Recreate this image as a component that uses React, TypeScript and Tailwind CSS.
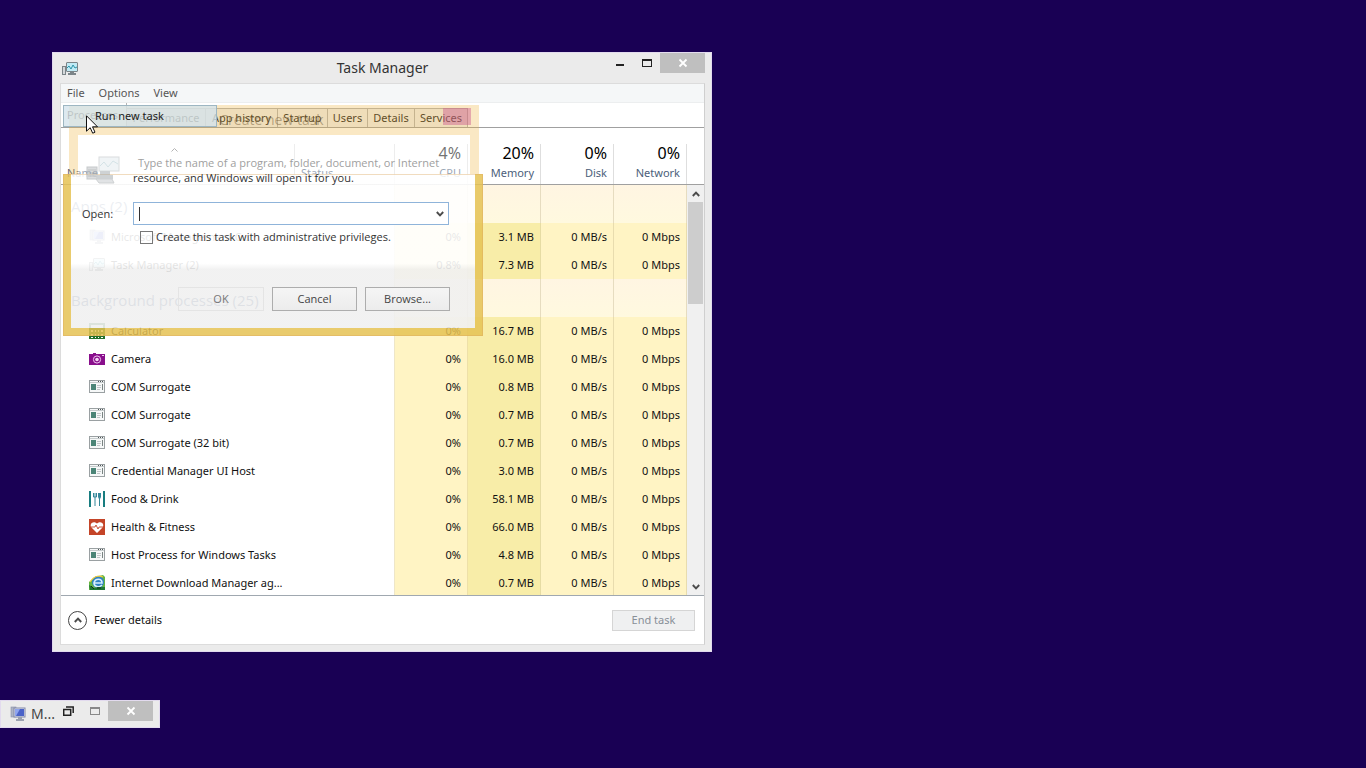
import type { ReactNode } from "react";

type IconName = "pc" | "monitor" | "calc" | "camera" | "app" | "food" | "health" | "idm";

interface Process {
  name: string;
  icon: IconName;
  cpu: string;
  memory: string;
}

const apps: Process[] = [
  { name: "Microsoft Management C...", icon: "pc", cpu: "0%", memory: "3.1 MB" },
  { name: "Task Manager (2)", icon: "monitor", cpu: "0.8%", memory: "7.3 MB" },
];

const background: Process[] = [
  { name: "Calculator", icon: "calc", cpu: "0%", memory: "16.7 MB" },
  { name: "Camera", icon: "camera", cpu: "0%", memory: "16.0 MB" },
  { name: "COM Surrogate", icon: "app", cpu: "0%", memory: "0.8 MB" },
  { name: "COM Surrogate", icon: "app", cpu: "0%", memory: "0.7 MB" },
  { name: "COM Surrogate (32 bit)", icon: "app", cpu: "0%", memory: "0.7 MB" },
  { name: "Credential Manager UI Host", icon: "app", cpu: "0%", memory: "3.0 MB" },
  { name: "Food & Drink", icon: "food", cpu: "0%", memory: "58.1 MB" },
  { name: "Health & Fitness", icon: "health", cpu: "0%", memory: "66.0 MB" },
  { name: "Host Process for Windows Tasks", icon: "app", cpu: "0%", memory: "4.8 MB" },
  { name: "Internet Download Manager ag...", icon: "idm", cpu: "0%", memory: "0.7 MB" },
];

function Glyph({ name }: { name: IconName }) {
  const drawings: Record<IconName, ReactNode> = {
    pc: (
      <>
        <rect x="1" y="1" width="5" height="10" fill="#aeb4c4" stroke="#8790a8" strokeWidth="0.6" />
        <rect x="4" y="2" width="11" height="9" fill="#dfe3ee" stroke="#8188a8" />
        <rect x="5" y="3" width="9" height="7" fill="#4a62c8" />
        <path d="M5 3h5L6 10H5z" fill="#8ea4ee" />
        <path d="M8 11h4v2h2v2H6v-2h2z" fill="#9ba1b0" />
      </>
    ),
    monitor: (
      <>
        <rect x="0.5" y="5.5" width="3" height="8" fill="#d4d8da" stroke="#7b8488" />
        <rect x="4.5" y="1.5" width="11" height="9" rx="0.5" fill="#bfeaf5" stroke="#7b8488" />
        <path d="M5 7l2-2 2 3 2-4 2 3 2-1" fill="none" stroke="#2b93a8" />
        <path d="M8 11h4v1h2v2H6v-2h2z" fill="#7b8488" />
      </>
    ),
    calc: (
      <>
        <rect width="16" height="16" fill="#23702b" />
        <path d="M2 2h12v3H2zM2 7h2v2H2zm4 0h1v2H6zm3 0h1v2H9zm3 0h2v2h-2zM2 11h2v2H2zm4 0h1v2H6zm3 0h1v2H9zm3 0h2v2h-2zM2 14h2v1H2zm4 0h1v1H6zm3 0h1v1H9zm3 0h2v1h-2z" fill="#fff" />
      </>
    ),
    camera: (
      <>
        <path d="M0 3h4V2h3v1h9v11H0z" fill="#890f8c" />
        <circle cx="8" cy="8.5" r="3.6" fill="none" stroke="#f2c6f2" />
        <circle cx="8" cy="8.5" r="1.8" fill="#f5d8f5" />
        <rect x="13" y="4" width="2" height="1" fill="#f2c6f2" />
      </>
    ),
    app: (
      <>
        <rect x="0.5" y="1.5" width="15" height="12" fill="#f6f8f8" stroke="#9aa0a2" />
        <path d="M1 3.5h14" stroke="#c6cccd" />
        <path d="M9 2.500h1m1 0h1m1 0h1" stroke="#4f5557" />
        <rect x="2" y="5" width="5" height="6" fill="#4b8577" />
        <path d="M8 6.500h4M8 8.500h4M8 10.500h3" stroke="#c0c6c8" />
        <path d="M13.5 5v6" stroke="#7a8483" />
      </>
    ),
    food: (
      <>
        <path d="M0 0h2v16H0zM14 0h2v16h-2z" fill="#187d80" />
        <path d="M4.5 2v4h3V2M6 2v13" fill="none" stroke="#35879a" />
        <path d="M9 2h3v4l-1 2v7h-1V8L9 6z" fill="#35879a" />
      </>
    ),
    health: (
      <>
        <rect width="16" height="16" fill="#c44428" />
        <path d="M8 14L2.5 8.5C0 5 4 1 8 4.5c4-3.500 8 .5 5.500 4z" fill="#fff" />
        <path d="M2 8h4l1-2 2 4 1-2h4" fill="none" stroke="#c44428" strokeWidth="0.9" />
      </>
    ),
    idm: (
      <>
        <path d="M0 15V7l6-5 8-2 2 2v13z" fill="#62b544" />
        <circle cx="9" cy="7" r="6" fill="#2d7fc4" />
        <path d="M5 8h8c0-5-7-5-8 0 0 4 5 5 8 2" fill="none" stroke="#d8f0fc" strokeWidth="1.6" />
        <path d="M1 7c3-5 8-7 13-5" fill="none" stroke="#eccb3c" strokeWidth="1.3" />
        <path d="M0 10l5 3 4-1 7 0v3H1z" fill="#1e7734" />
        <path d="M2 11l3 3M8 13h4" stroke="#142f1c" />
      </>
    ),
  };
  return (
    <svg viewBox="0 0 16 16" className="size-4 shrink-0" aria-hidden="true">
      {drawings[name]}
    </svg>
  );
}

function Cross() {
  return (
    <svg viewBox="0 0 10 10" className="size-[10px]" aria-hidden="true">
      <path d="M1.500 1.500l7 7m0-7l-7 7" stroke="#fff" strokeWidth="1.8" />
    </svg>
  );
}

function Chevron({ up = false }: { up?: boolean }) {
  return (
    <svg viewBox="0 0 8 6" className="h-[6px] w-2" aria-hidden="true">
      <path d={up ? "M.8 5L4 1.600 7.200 5" : "M.8 1L4 4.400 7.200 1"} fill="none" stroke="#4b4b4b" strokeWidth="1.900" />
    </svg>
  );
}

function GroupRow({ title }: { title: string }) {
  return (
    <tr className="h-[38px]">
      <th scope="rowgroup" className="border-r border-[#eee6c8] pt-1 pl-[10px] text-left font-['Open_Sans','Noto_Sans',sans-serif] text-[15px] font-normal text-[#39547e]">
        {title}
      </th>
      {[0, 1, 2, 3].map((n) => (
        <td key={n} className="border-r border-[#e6dcc0] bg-linear-to-b from-[#fff5e2] to-[#fff9df]" />
      ))}
    </tr>
  );
}

function ProcessRow({ process }: { process: Process }) {
  return (
    <tr className="h-7">
      <td className="border-r border-[#eee6c8] pl-7">
        <div className="flex items-center gap-[6px]">
          <Glyph name={process.icon} />
          {process.name}
        </div>
      </td>
      <td className="border-r border-[#eee0a8] bg-[#fff4c4] pr-[6px] text-right">{process.cpu}</td>
      <td className="border-r border-[#e6dca4] bg-[#f8eda8] pr-[6px] text-right">{process.memory}</td>
      <td className="border-r border-[#e8dcae] bg-[#fff4c4] pr-[6px] text-right">0 MB/s</td>
      <td className="border-r border-[#e8dcae] bg-[#fff4c4] pr-[6px] text-right">0 Mbps</td>
    </tr>
  );
}

function UsageHeader({ value, label }: { value: string; label: string }) {
  return (
    <th scope="col" className="border-b border-[#a0a0a0] p-0 align-bottom font-normal">
      <div className="flex h-10 flex-col items-end justify-end border-r border-[#dedede] pr-[6px] pb-px">
        <span className="text-base leading-5 text-black">{value}</span>
        <span className="leading-5 text-[#4c607a]">{label}</span>
      </div>
    </th>
  );
}

function ProcessTable() {
  return (
    <div className="flex min-h-0 flex-1 overflow-hidden border-b border-[#a0a8b0]">
      <div className="min-w-0 flex-1 overflow-hidden">
        <table className="w-full table-fixed border-separate border-spacing-0">
          <colgroup>
            <col />
            <col className="w-[73px]" />
            <col className="w-[73px]" />
            <col className="w-[73px]" />
            <col className="w-[73px]" />
          </colgroup>
          <thead>
            <tr className="h-[57px]">
              <th scope="col" className="border-b border-[#a0a0a0] p-0 align-bottom font-normal text-[#4c607a]">
                <div className="flex h-10 items-end border-r border-[#dedede]">
                  <div className="flex h-full flex-1 items-end justify-between border-r border-[#dedede] pb-px pl-[6px] leading-5">
                    Name
                    <svg viewBox="0 0 7 4" className="mb-[31px] h-1 w-[7px]" aria-hidden="true">
                      <path d="M.5 3.500l3-3 3 3" fill="none" stroke="#777" />
                    </svg>
                    <span className="w-11" />
                  </div>
                  <div className="w-[99px] pb-px pl-[6px] text-left leading-5">Status</div>
                </div>
              </th>
              <UsageHeader value="4%" label="CPU" />
              <UsageHeader value="20%" label="Memory" />
              <UsageHeader value="0%" label="Disk" />
              <UsageHeader value="0%" label="Network" />
            </tr>
          </thead>
          <tbody>
            <GroupRow title="Apps (2)" />
            {apps.map((p) => (
              <ProcessRow key={p.name} process={p} />
            ))}
            <GroupRow title="Background processes (25)" />
            {background.map((p, i) => (
              <ProcessRow key={i} process={p} />
            ))}
          </tbody>
        </table>
      </div>
      <div className="flex w-[17px] flex-col bg-[#f0f0f0]">
        <div className="h-[57px] border-b border-[#a0a0a0] bg-white" />
        <button aria-label="Scroll up" className="flex h-[17px] items-center justify-center">
          <Chevron up />
        </button>
        <div className="mx-px h-[102px] bg-[#cdcdcd]" />
        <div className="flex-1" />
        <button aria-label="Scroll down" className="flex h-[17px] items-center justify-center">
          <Chevron />
        </button>
      </div>
    </div>
  );
}

function Tab({ children, className }: { children: string; className: string }) {
  return (
    <button role="tab" className={`h-[19px] border-t border-r border-[#b4b4b4] bg-[#f0f0f0] pb-px text-center whitespace-nowrap ${className}`}>
      {children}
    </button>
  );
}

function TaskManager() {
  return (
    <section
      aria-label="Task Manager"
      className="absolute top-[52px] left-[52px] flex h-[600px] w-[660px] flex-col border border-[#e2daee] bg-[#ebebeb] pr-[6px] pb-[6px] pl-[7px]"
    >
      <header className="relative flex h-[30px] shrink-0 items-start justify-between">
        <div className="pt-2 pl-[2px]">
          <Glyph name="monitor" />
        </div>
        <h1 className="absolute inset-x-0 top-1 text-center text-[14px] leading-[22px] text-[#333]">Task Manager</h1>
        <div className="relative flex h-5 items-stretch">
          <button aria-label="Minimize" className="flex w-7 items-center justify-center pt-1">
            <span className="h-[2px] w-2 bg-[#222]" />
          </button>
          <button aria-label="Maximize" className="flex w-[26px] items-center justify-center">
            <span className="h-2 w-[10px] border border-t-2 border-[#222]" />
          </button>
          <button aria-label="Close" className="flex w-[45px] items-center justify-center bg-[#bfbfbf]">
            <Cross />
          </button>
        </div>
      </header>
      <div className="flex min-h-0 flex-1 flex-col border border-[#dcdcdc] border-r-[#cfcfcf] bg-white">
        <nav className="flex h-[19px] shrink-0 items-center gap-[14px] border-b border-[#eceeef] bg-[#f5f7f8] pl-[6px] text-[#555]">
          <button>File</button>
          <button>Options</button>
          <button>View</button>
        </nav>
        <div role="tablist" className="flex h-[25px] shrink-0 items-end border-b border-[#a0a0a0] text-[#222]">
          <button role="tab" aria-selected="true" className="h-6 w-[66px] border-r border-[#b4b4b4] pl-[6px] text-left">
            Processes
          </button>
          <Tab className="w-[79px]">Performance</Tab>
          <Tab className="w-[72px]">App history</Tab>
          <Tab className="w-[50px]">Startup</Tab>
          <Tab className="w-10">Users</Tab>
          <Tab className="w-[47px]">Details</Tab>
          <Tab className="w-[53px]">Services</Tab>
        </div>
        <ProcessTable />
        <footer className="flex h-[48px] shrink-0 items-center justify-between pr-[9px] pl-[7px]">
          <button className="flex items-center gap-[7px]">
            <span className="flex size-[19px] items-center justify-center rounded-full border border-[#444]">
              <Chevron up />
            </span>
            Fewer details
          </button>
          <button disabled className="h-[21px] w-[83px] border border-[#d5d5d5] bg-[#eff0f1] text-[#888f98]">
            End task
          </button>
        </footer>
      </div>
    </section>
  );
}

function RunDialog() {
  return (
    <section
      aria-label="Create new task"
      className="absolute top-[105px] left-[63px] flex w-[420px] flex-col font-['Open_Sans','Noto_Sans',sans-serif]"
    >
      <div className="mr-1 ml-[6px] flex h-[69px] flex-col">
        <div className="flex h-[30px] items-start bg-[#eeb43c]/30">
          <h2 className="flex-1 pt-1 pl-[31px] text-center text-[14px] leading-[22px] text-[#6b5530]/45">Create new task</h2>
          <button aria-label="Close dialog" className="mt-[3px] mr-2 h-[17px] w-7 bg-[#cc5a90]/45" />
        </div>
        <div className="flex-1 border-x-[9px] border-[#eeb43c]/30 bg-white/45 bg-clip-padding" />
      </div>
      <div className="flex h-[162px] flex-col border-8 border-t-0 border-[#e5c253]/85 bg-clip-padding bg-linear-to-b from-white/90 from-58% to-[#f0f0f0]/90 to-62% outline-1 -outline-offset-1 outline-[#dba75e]/40">
        <form className="flex flex-1 flex-col" onSubmit={(e) => e.preventDefault()}>
          <div className="mt-7 flex items-center pl-[11px]">
            <label htmlFor="task" className="w-[51px] text-[#333]">
              Open:
            </label>
            <div className="relative flex h-[23px] w-[316px] items-center border border-[#8fb4da] bg-white pr-1">
              <input id="task" className="min-w-0 flex-1 bg-transparent px-1 outline-none" />
              <span className="absolute top-1 left-[5px] h-[14px] w-px bg-[#333]" />
              <Chevron />
            </div>
          </div>
          <label className="mt-[2px] flex items-center gap-[3px] pl-[69px] leading-5 text-[#333]">
            <input type="checkbox" className="size-[13px] appearance-none border border-[#777]" />
            Create this task with administrative privileges.
          </label>
          <div className="mt-auto mb-[17px] flex justify-end gap-2 pr-[25px]">
            <button disabled className="h-6 w-[86px] border border-[#e4e4e4] text-[#777]">
              OK
            </button>
            <button className="h-6 w-[85px] border border-[#adadad] bg-linear-to-b from-[#f5f5f5] to-[#ececec] text-[#444]">
              Cancel
            </button>
            <button className="h-6 w-[85px] border border-[#adadad] bg-linear-to-b from-[#f5f5f5] to-[#ececec] text-[#444]">
              Browse...
            </button>
          </div>
        </form>
      </div>
      <div className="absolute top-12 left-[22px] flex">
        <svg viewBox="0 0 38 34" className="h-[34px] w-[38px] opacity-50" aria-hidden="true">
          <rect x="14" y="4" width="20" height="14" fill="#e2ebee" stroke="#b5bcc0" />
          <path d="M15 13l4-4 4 5 5-6 5 3" stroke="#aac7cf" fill="none" />
          <rect x="2" y="14" width="10" height="12" fill="#b9bdc0" stroke="#8f9599" />
          <path d="M3 17h8M3 20h8M3 23h8" stroke="#80868a" />
          <path d="M15 18h10v4h3v4H12v-4h3z" fill="#9fa6aa" />
          <path d="M11 26h16l2 4H14z" fill="#c4c9cc" stroke="#9da3a7" />
        </svg>
        <p className="pt-[2px] pl-[10px] leading-[15px] whitespace-nowrap">
          <span className="pl-[5px] text-[#a0a0a0]">Type the name of a program, folder, document, or Internet</span>
          <br />
          <span className="text-[#333]">resource, and Windows will open it for you.</span>
        </p>
      </div>
    </section>
  );
}

export default function App() {
  return (
    <main className="relative min-h-screen overflow-hidden bg-[#190054] font-['Noto_Sans','Open_Sans',sans-serif] text-[11px] leading-4 text-[#111]">
      <TaskManager />
      <RunDialog />
      <div role="menu" className="absolute top-[105px] left-[63px] w-[154px]">
        <button
          role="menuitem"
          className="h-[22px] w-full border border-[#9db6c2] bg-[#d4e3ec]/80 pl-[31px] text-left text-[#222]"
        >
          Run new task
        </button>
      </div>
      <svg viewBox="0 0 12 19" className="absolute top-[115px] left-[86px] h-[19px] w-3" aria-hidden="true">
        <path d="M.5.8v15.400l3.700-3.500 2.500 5.500 2.300-1-2.500-5.400h5z" fill="#fff" stroke="#111" />
      </svg>
      <section
        aria-label="Minimized window"
        className="absolute top-[700px] left-0 flex h-7 w-40 items-start border border-[#e2daee] bg-[#ebebeb]"
      >
        <div className="flex min-w-0 flex-1 items-center gap-[5px] pt-[5px] pl-[9px] text-[14px] text-[#444]">
          <Glyph name="pc" />
          M...
        </div>
        <div className="flex h-5 shrink-0 pr-[6px]">
          <button aria-label="Restore" className="flex w-7 items-center justify-center">
            <svg viewBox="0 0 11 10" className="h-[10px] w-[11px]" aria-hidden="true">
              <path d="M.7 3.500h7v5.800h-7zM3 1h7.200v6" fill="none" stroke="#222" strokeWidth="1.500" />
            </svg>
          </button>
          <button aria-label="Maximize" className="flex w-[26px] items-center justify-center">
            <span className="h-2 w-[10px] border border-t-2 border-[#888]" />
          </button>
          <button aria-label="Close" className="flex w-[45px] items-center justify-center bg-[#bfbfbf]">
            <Cross />
          </button>
        </div>
      </section>
    </main>
  );
}
